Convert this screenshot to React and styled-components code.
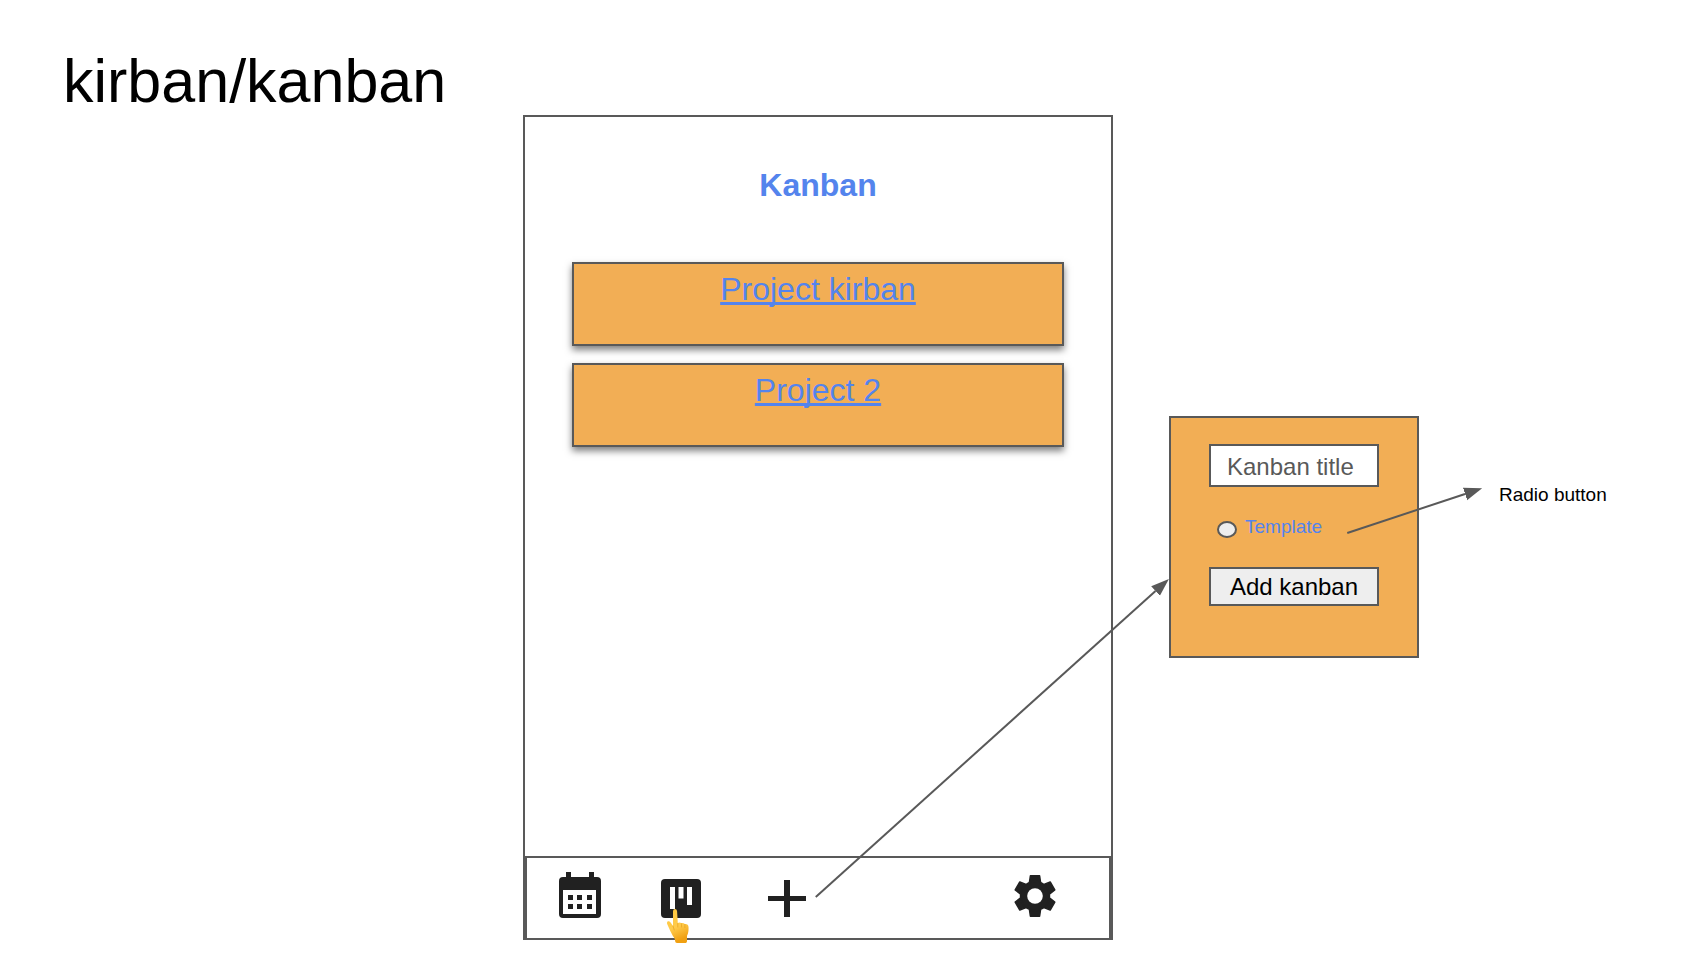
import React from "react";
import styled, { createGlobalStyle } from "styled-components";

const line = "#595959";
const orange = "#f2ae55";
const blue = "#5484ed";
const ink = "#212121";

const GlobalStyle = createGlobalStyle`
  *, *::before, *::after { box-sizing: border-box; }
  body {
    margin: 0;
    background: #fff;
    color: #000;
    font-family: "Liberation Sans", Arial, sans-serif;
  }
`;

const Slide = styled.main`
  position: relative;
  min-height: 100vh;
  padding: 47px 0 40px;
`;

const SlideTitle = styled.h1`
  margin: 0;
  padding-left: 63px;
  font-size: 61px;
  line-height: 68px;
  font-weight: 400;
`;

const Board = styled.div`
  display: grid;
  grid-template-columns: 523fr 590fr 56fr 250fr 80fr 183fr;
  align-items: start;
`;

const Phone = styled.section`
  grid-column: 2;
  display: flex;
  flex-direction: column;
  min-height: 825px;
  border: 2px solid ${line};
`;

const PhoneBody = styled.div`
  flex: 1;
  padding: 50px 47px 0;
`;

const PhoneTitle = styled.h2`
  margin: 0 0 59px;
  font-size: 32px;
  line-height: 36px;
  font-weight: 700;
  text-align: center;
  color: ${blue};
`;

const ProjectList = styled.ul`
  display: flex;
  flex-direction: column;
  gap: 17px;
  margin: 0;
  padding: 0;
  list-style: none;
`;

const ProjectCard = styled.li`
  height: 84px;
  padding-top: 7px;
  border: 2px solid ${line};
  background: ${orange};
  box-shadow: 0 4px 7px rgba(0, 0, 0, 0.5);
  text-align: center;
`;

const ProjectLink = styled.a`
  font-size: 32px;
  line-height: 36px;
  color: ${blue};
  text-decoration: underline;
  text-decoration-thickness: 3px;
  text-decoration-skip-ink: none;
  text-underline-offset: 2px;
`;

const TabBar = styled.nav`
  display: flex;
  align-items: center;
  gap: 60px;
  height: 82px;
  padding: 0 48px 0 32px;
  border: 2px solid ${line};
  border-bottom: 0;
`;

const TabButton = styled.button`
  position: relative;
  display: flex;
  align-items: center;
  justify-content: center;
  width: ${(p) => p.$width}px;
  height: 52px;
  margin: 0 0 0 ${(p) => (p.$last ? "auto" : "0")};
  padding: 0;
  border: 0;
  background: none;
  color: ${ink};
  cursor: pointer;

  svg { display: block; flex: none; }
`;

const Pointer = styled.svg`
  position: absolute;
  left: 6px;
  top: 37px;
`;

const Popup = styled.form`
  grid-column: 4;
  display: flex;
  flex-direction: column;
  height: 242px;
  margin-top: 301px;
  padding: 26px 38px 0;
  border: 2px solid ${line};
  background: ${orange};
`;

const TitleInput = styled.input`
  width: 100%;
  height: 43px;
  padding: 2px 0 0 16px;
  border: 2px solid ${line};
  border-radius: 0;
  background: #fff;
  color: ${line};
  font: 24px/28px "Liberation Sans", Arial, sans-serif;

  &::placeholder { color: ${line}; opacity: 1; }
`;

const RadioRow = styled.label`
  display: flex;
  align-items: center;
  gap: 8px;
  height: 24px;
  margin: 28px 0 28px;
  padding-left: 8px;
  color: ${blue};
  font-size: 19px;
  line-height: 24px;
`;

const Radio = styled.input`
  appearance: none;
  flex: none;
  width: 20px;
  height: 17px;
  margin: 4px 0 0;
  border: 2px solid ${line};
  border-radius: 50%;
  background: #eee;

  &:checked { background: ${line}; }
`;

const AddButton = styled.button`
  width: 100%;
  height: 39px;
  padding: 0;
  border: 2px solid ${line};
  border-radius: 0;
  background: #eee;
  color: #000;
  font: 24px/28px "Liberation Sans", Arial, sans-serif;
  cursor: pointer;
`;

const Note = styled.p`
  grid-column: 6;
  margin: 368px 0 0;
  font-size: 19px;
  line-height: 24px;
  white-space: nowrap;
`;

const Connectors = styled.svg`
  position: absolute;
  inset: 0;
  width: 100%;
  height: 100%;
  pointer-events: none;
`;

function CalendarIcon() {
  return (
    <svg width="42" height="52" viewBox="0 0 42 52" fill={ink} aria-hidden="true">
      <path
        fillRule="evenodd"
        d="M7 0h5v5h18V0h5v5h3a4 4 0 0 1 4 4v33a4 4 0 0 1-4 4H4a4 4 0 0 1-4-4V9a4 4 0 0 1 4-4h3zM4 18v24h33V18z"
      />
      <path d="M9 23h5v5H9zM18 23h5v5h-5zM28 23h5v5h-5zM9 32h5v5H9zM18 32h5v5h-5zM28 32h5v5h-5z" />
    </svg>
  );
}

function KanbanIcon() {
  return (
    <svg width="40" height="39" viewBox="0 0 40 39" aria-hidden="true">
      <rect width="40" height="39" rx="4" fill={ink} />
      <path d="M9 8h5v22H9zM17.500 8h5v11.500h-5zM26 8h5v18h-5z" fill="#fff" />
    </svg>
  );
}

function PlusIcon() {
  return (
    <svg width="38" height="37" viewBox="0 0 38 37" aria-hidden="true">
      <path d="M16 0h6v16h16v5H22v16h-6V21H0v-5h16z" fill={ink} />
    </svg>
  );
}

function GearIcon() {
  return (
    <svg width="52" height="52" viewBox="-26 -24 52 52" aria-hidden="true">
      <g fill={ink} stroke={ink} strokeWidth="1.5" strokeLinejoin="round">
        {[0, 60, 120, 180, 240, 300].map((angle) => (
          <path
            key={angle}
            d="M-5.500-14.200L-4.600-20.200H4.600L5.500-14.200L0 0z"
            transform={`rotate(${angle})`}
          />
        ))}
        <circle r="14.500" />
      </g>
      <circle r="7.800" fill="#fff" />
    </svg>
  );
}

function HandPointer() {
  return (
    <Pointer width="22" height="34" viewBox="0 0 22 34" aria-hidden="true">
      <defs>
        <linearGradient id="skin" x1="0" y1="0" x2="0.3" y2="1">
          <stop offset="0" stopColor="#ffc83d" />
          <stop offset="0.6" stopColor="#ffcb4c" />
          <stop offset="1" stopColor="#f0a012" />
        </linearGradient>
      </defs>
      <path
        fill="url(#skin)"
        d="M6 2.500C6 .8 7 0 8 0s2 .8 2.100 2.500L10.800 14c1-.7 2.700-.7 3.600.3 1.200-.5 2.700-.2 3.400.8 2-.4 3.700.8 3.700 3 .2 3.600-.2 6.400-1.500 8.700v5.400c0 1-.7 1.800-1.800 1.800H10c-1.100 0-1.700-.7-1.800-1.700-.1-2-.9-3.500-2.300-5.300L3.300 22 .4 15.500c-.8-1.800-.3-3 .6-3.300 1-.3 2 .3 3 1.800L6 17z"
      />
      <path
        fill="none"
        stroke="#e39a18"
        strokeWidth="0.6"
        strokeLinecap="round"
        d="M10.800 14.500v3.500M14.400 14.500l.2 3.600M17.900 15.500v3M6 17l1.200 4"
      />
    </Pointer>
  );
}

const projects = ["Project kirban", "Project 2"];

export default function App() {
  return (
    <>
      <GlobalStyle />
      <Slide>
        <SlideTitle>kirban/kanban</SlideTitle>
        <Board>
          <Phone>
            <PhoneBody>
              <PhoneTitle>Kanban</PhoneTitle>
              <ProjectList>
                {projects.map((name) => (
                  <ProjectCard key={name}>
                    <ProjectLink href="#">{name}</ProjectLink>
                  </ProjectCard>
                ))}
              </ProjectList>
            </PhoneBody>
            <TabBar>
              <TabButton type="button" $width={42} aria-label="Calendar">
                <CalendarIcon />
              </TabButton>
              <TabButton type="button" $width={40} aria-label="Kanban boards">
                <KanbanIcon />
                <HandPointer />
              </TabButton>
              <TabButton type="button" $width={52} aria-label="Add">
                <PlusIcon />
              </TabButton>
              <TabButton type="button" $width={52} $last aria-label="Settings">
                <GearIcon />
              </TabButton>
            </TabBar>
          </Phone>
          <Popup onSubmit={(e) => e.preventDefault()}>
            <TitleInput type="text" aria-label="Kanban title" placeholder="Kanban title" />
            <RadioRow>
              <Radio type="radio" name="template" />
              Template
            </RadioRow>
            <AddButton type="submit">Add kanban</AddButton>
          </Popup>
          <Note>Radio button</Note>
        </Board>
        <Connectors aria-hidden="true">
          <defs>
            <marker
              id="head"
              markerUnits="userSpaceOnUse"
              markerWidth="18"
              markerHeight="14"
              refX="0"
              refY="7"
              orient="auto"
            >
              <path d="M0 0.500L18 7L0 13.500z" fill={line} />
            </marker>
          </defs>
          <g stroke={line} strokeWidth="2">
            <line x1="48.5%" y1="897" x2="68.7%" y2="591" markerEnd="url(#head)" />
            <line x1="80.1%" y1="533" x2="87.1%" y2="494" markerEnd="url(#head)" />
          </g>
        </Connectors>
      </Slide>
    </>
  );
}
